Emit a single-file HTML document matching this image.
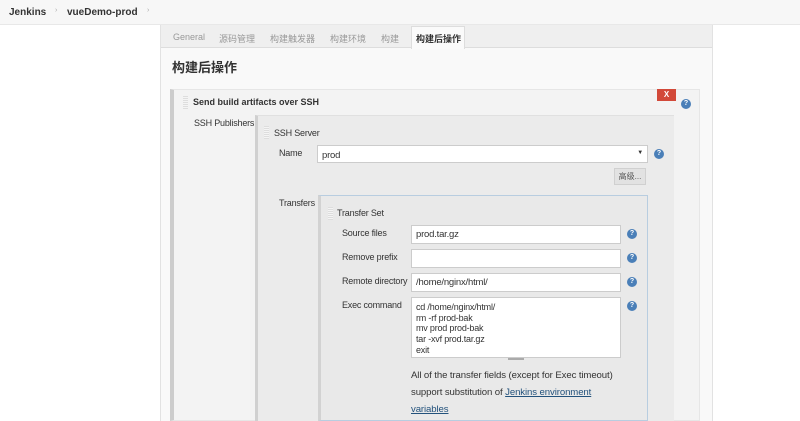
<!DOCTYPE html>
<html><head><meta charset="utf-8"><style>
*{box-sizing:border-box}
body{margin:0;width:800px;height:421px;overflow:hidden;background:#fff;font-family:"Liberation Sans","Noto Sans CJK SC",sans-serif;font-size:10px;color:#333;position:relative}
.a{position:absolute}
.bc{left:0;top:0;width:800px;height:25px;background:#f7f7f7;border-bottom:1px solid #e8e8e8}
.help{width:10px;height:10px;border-radius:50%;background:#4a7fb8;color:#fff;font-size:7px;font-weight:bold;text-align:center;line-height:10px}
.inp{position:absolute;background:#fff;border:1px solid #ccc;height:19px;font-size:9.5px;padding:3px 4px;color:#333;letter-spacing:-0.2px}
.lbl{position:absolute;color:#333;font-size:9px;letter-spacing:-0.2px;white-space:nowrap}
.grip{position:absolute;width:5px;height:13px;background:repeating-linear-gradient(0deg,#ddd 0 1px,#f4f4f4 1px 2px)}
</style></head><body>
<div class="a bc"></div>
<div class="a" style="left:9px;top:7px;font-weight:bold;font-size:10px">Jenkins</div>
<div class="a" style="left:55px;top:7px;color:#aaa;font-size:7px">›</div>
<div class="a" style="left:67px;top:7px;font-weight:bold;font-size:10px">vueDemo-prod</div>
<div class="a" style="left:147px;top:7px;color:#aaa;font-size:7px">›</div>

<div class="a" style="left:160px;top:25px;width:553px;height:396px;background:#f9f9f9;border-left:1px solid #e2e2e2;border-right:1px solid #e2e2e2"></div>
<div class="a" style="left:161px;top:25px;width:551px;height:23px;background:#efefef;border-bottom:1px solid #ddd"></div>
<div class="a" style="top:32px;left:173px;color:#999;font-size:9px">General</div>
<div class="a" style="top:32px;left:219px;color:#999;font-size:9px">源码管理</div>
<div class="a" style="top:32px;left:270px;color:#999;font-size:9px">构建触发器</div>
<div class="a" style="top:32px;left:330px;color:#999;font-size:9px">构建环境</div>
<div class="a" style="top:32px;left:381px;color:#999;font-size:9px">构建</div>
<div class="a" style="top:26px;left:411px;width:54px;height:23px;background:#fafafa;border:1px solid #ddd;border-bottom:none"></div>
<div class="a" style="top:32px;left:416px;font-weight:bold;font-size:9px">构建后操作</div>
<div class="a" style="top:57px;left:172px;font-weight:bold;font-size:13px">构建后操作</div>

<div class="a" style="left:170px;top:89px;width:530px;height:332px;background:#f3f3f3;border:1px solid #e6e6e6;border-left:4px solid #ccc"></div>
<div class="grip" style="left:183px;top:96px"></div>
<div class="a" style="left:193px;top:97px;font-weight:bold;font-size:9px">Send build artifacts over SSH</div>
<div class="a" style="left:657px;top:89px;width:19px;height:12px;background:#d24939;color:#fff;font-size:8px;text-align:center;line-height:12px;font-weight:bold">X</div>
<div class="a help" style="left:681px;top:99px">?</div>
<div class="lbl" style="left:194px;top:118px">SSH Publishers</div>

<div class="a" style="left:255px;top:115px;width:419px;height:306px;background:#ebebeb;border-left:3px solid #d0d0d0;border-top:1px solid #e0e0e0"></div>
<div class="grip" style="left:264px;top:126px"></div>
<div class="lbl" style="left:274px;top:128px">SSH Server</div>
<div class="lbl" style="left:279px;top:148px">Name</div>
<div class="inp" style="left:317px;top:145px;width:331px;height:18px;padding-top:4px">prod<span style="position:absolute;right:4px;top:4px;font-size:6px">▼</span></div>
<div class="a help" style="left:654px;top:149px">?</div>
<div class="a" style="left:614px;top:168px;width:32px;height:17px;background:#e2e2e2;border:1px solid #d0d0d0;font-size:8px;text-align:center;line-height:15px;color:#555">高级...</div>
<div class="lbl" style="left:279px;top:198px">Transfers</div>

<div class="a" style="left:318px;top:195px;width:330px;height:226px;background:#e9e9e9;border:1px solid #b8cde0;border-left:3px solid #d2d2d2"></div>
<div class="grip" style="left:328px;top:207px"></div>
<div class="lbl" style="left:337px;top:208px">Transfer Set</div>
<div class="lbl" style="left:342px;top:228px">Source files</div>
<div class="inp" style="left:411px;top:225px;width:210px">prod.tar.gz</div>
<div class="a help" style="left:627px;top:229px">?</div>
<div class="lbl" style="left:342px;top:252px">Remove prefix</div>
<div class="inp" style="left:411px;top:249px;width:210px"></div>
<div class="a help" style="left:627px;top:253px">?</div>
<div class="lbl" style="left:342px;top:276px">Remote directory</div>
<div class="inp" style="left:411px;top:273px;width:210px">/home/nginx/html/</div>
<div class="a help" style="left:627px;top:277px">?</div>
<div class="lbl" style="left:342px;top:300px">Exec command</div>
<div class="inp" style="left:411px;top:297px;width:210px;height:61px;line-height:10.7px;padding-top:4px;font-size:9px">cd /home/nginx/html/<br>rm -rf prod-bak<br>mv prod prod-bak<br>tar -xvf prod.tar.gz<br>exit</div>
<div class="a" style="left:508px;top:358px;width:16px;height:2px;background:#aaa"></div>
<div class="a help" style="left:627px;top:301px">?</div>
<div class="a" style="left:411px;top:367px;width:205px;font-size:9.6px;line-height:17px;color:#333;letter-spacing:-0.1px">All of the transfer fields (except for Exec timeout) support substitution of <span style="color:#23527c;text-decoration:underline">Jenkins environment</span> <span style="color:#23527c;text-decoration:underline">variables</span></div>
</body></html>
